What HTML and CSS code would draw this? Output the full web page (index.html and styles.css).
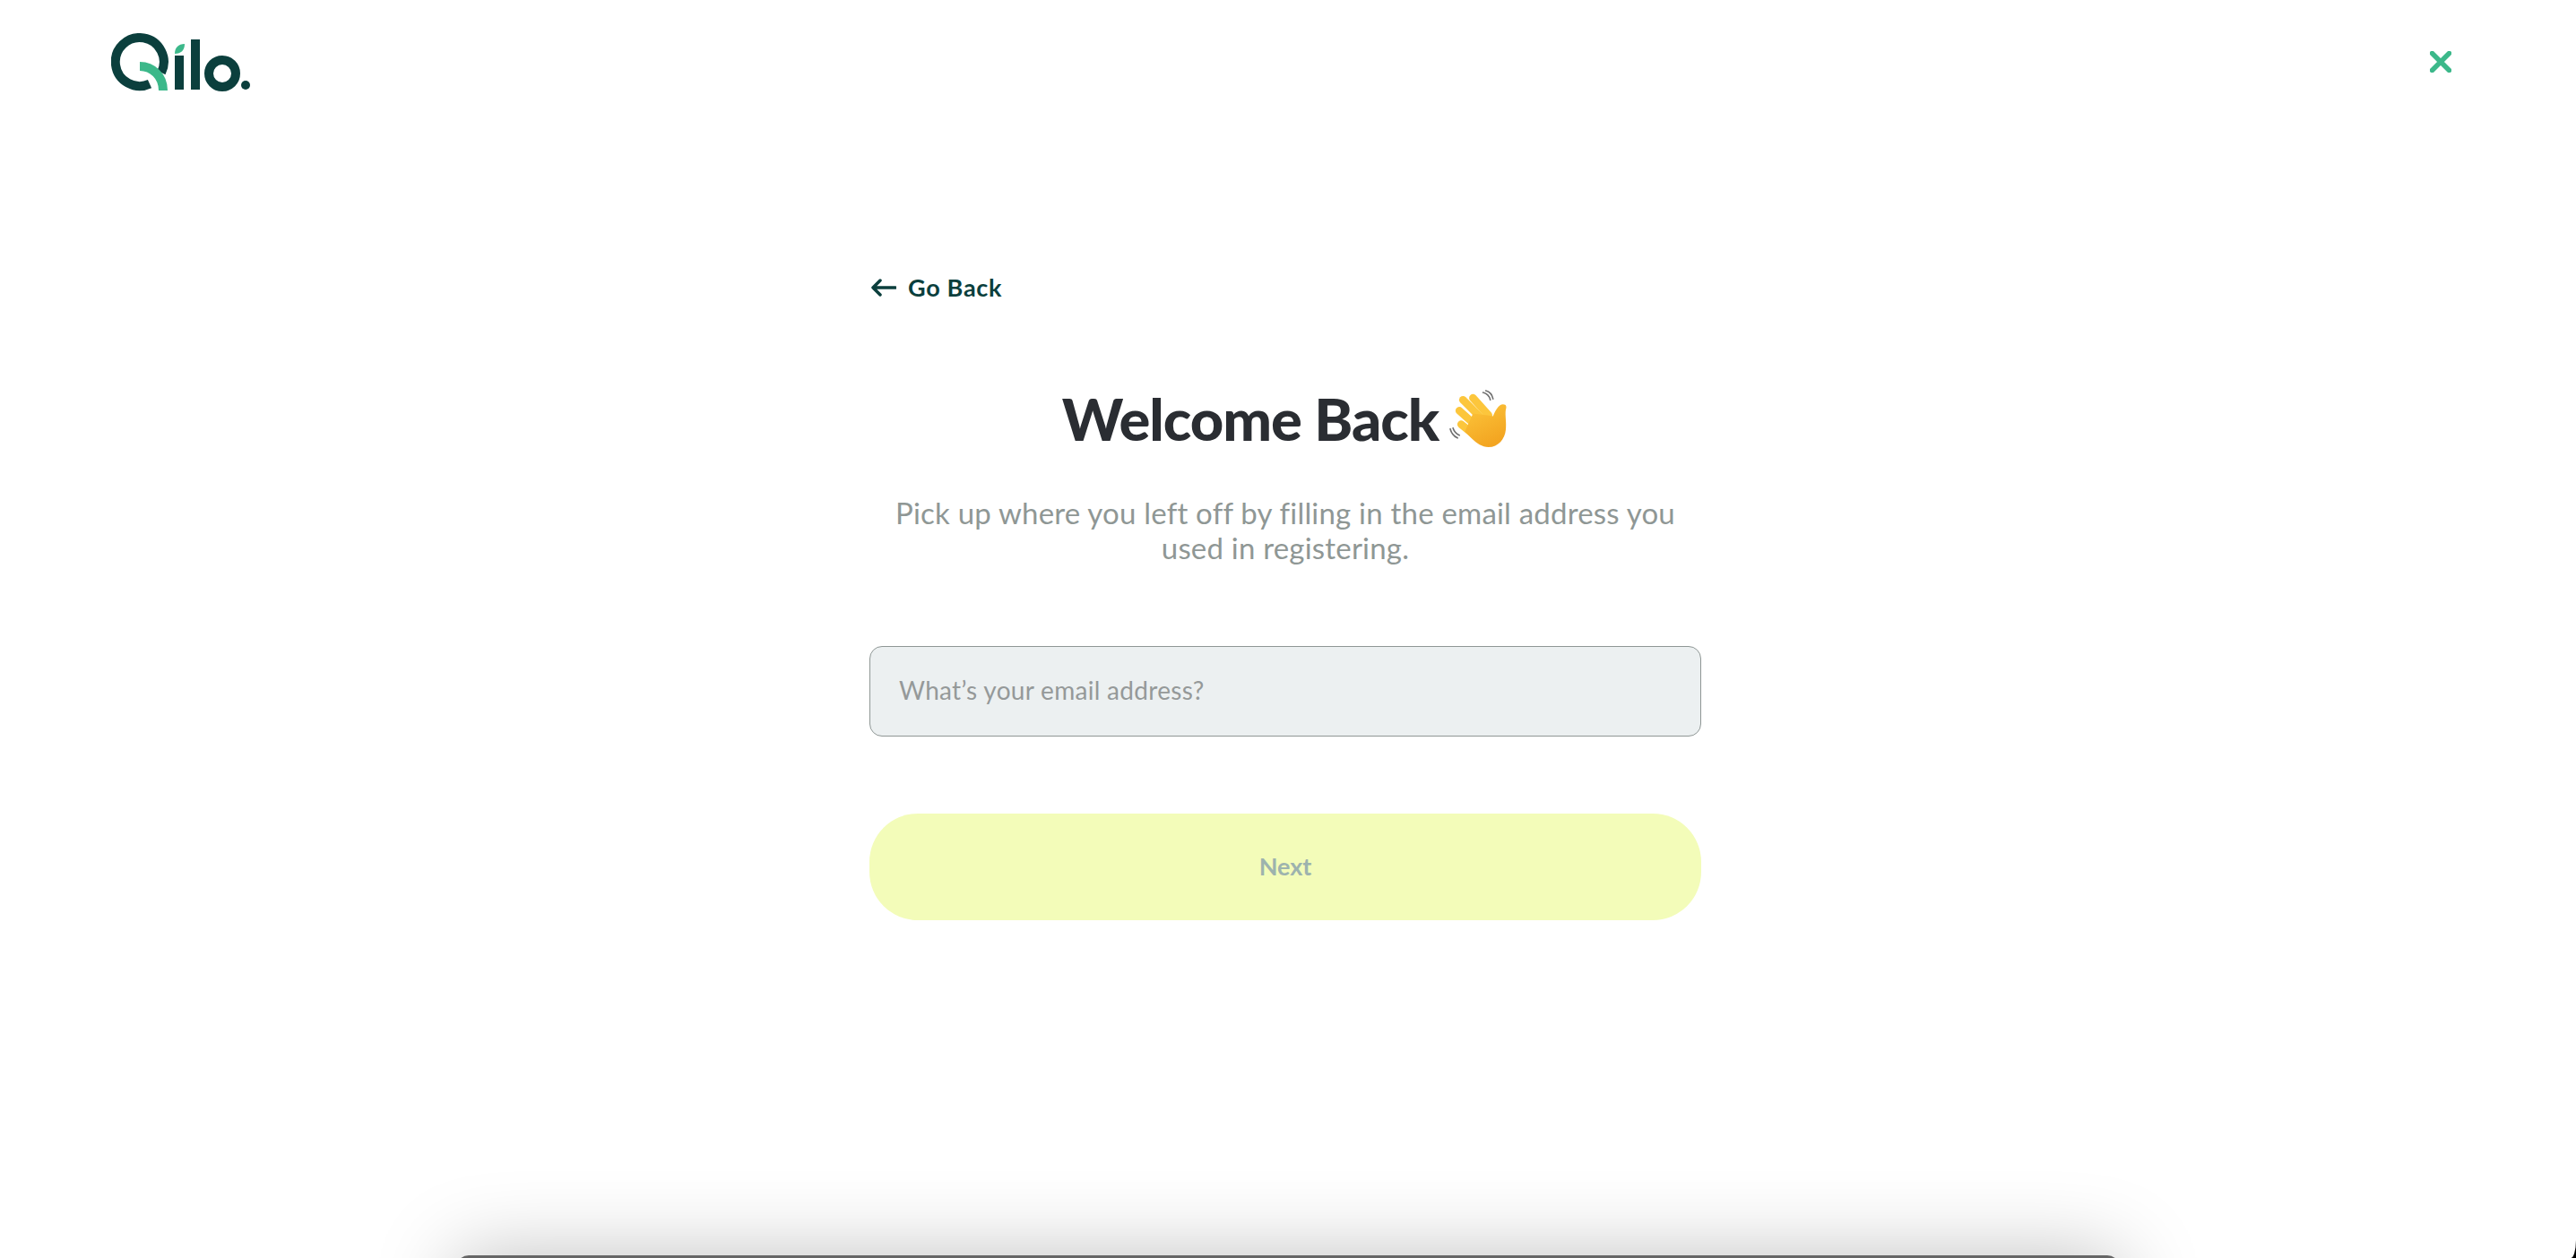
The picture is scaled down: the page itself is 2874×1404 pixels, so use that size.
FILE: index.html
```html
<!DOCTYPE html>
<html lang="en">
  <head>
    <meta charset="UTF-8" />
    <title>Qilo - Welcome Back</title>
    <link rel="stylesheet" href="styles.css">
  </head>
  <body>
    <div class="page">
      <header class="topbar">
        <svg class="logo" viewBox="0 0 156 65" role="img" aria-label="Qilo.">
          <path class="logo-dark-line" d="M43 56.6A27 27 0 1 1 56 44" />
          <path class="logo-green-line" d="M32 37C46 37 58 48 58 64" />
          <path class="logo-green" d="M71 23C71 16 75 12 82 12C82 19 78 23 71 23Z" />
          <rect class="logo-dark" x="71" y="25" width="10" height="38" />
          <rect class="logo-dark" x="89" y="7" width="10" height="56" />
          <circle class="logo-o" cx="124" cy="45" r="15" />
          <circle class="logo-dark" cx="150" cy="58" r="5" />
        </svg>
        <button class="close" aria-label="Close">
          <svg viewBox="0 0 24 24" width="24" height="24">
            <path d="M2.5 2.5L21.5 21.5M21.5 2.5L2.5 21.5" />
          </svg>
        </button>
      </header>

      <main class="form">
        <a class="back" href="#">
          <svg viewBox="0 0 28 20" width="28" height="20">
            <path d="M27 10H2M10 2L2 10L10 18" />
          </svg>
          <span>Go Back</span>
        </a>

        <h1 class="title">
          <span>Welcome Back</span>
          <svg class="wave" viewBox="20 20 65 65" width="66" height="66" aria-hidden="true">
            <defs>
              <linearGradient id="skin" x1="0" y1="0" x2="0.5" y2="1">
                <stop offset="0" stop-color="#fcc63c" />
                <stop offset="1" stop-color="#f3a521" />
              </linearGradient>
            </defs>
            <path class="wave-lines" d="M57 25C61 26 64 29 65 33M60 23C64 24 67 27 68 32M21 65C22 69 25 73 29 75M24 64C25 67 27 70 31 72" />
            <g class="fingers">
              <path d="M35 33L55 53" />
              <path d="M46 31L63 50" />
              <path d="M31 45L50 62" />
              <path d="M33 60L48 72" />
            </g>
            <path class="palm" d="M46 48L62 50L68 51C70 46 74 38 79 38C83 38 83 41 82 44C81 50 83 58 82 66C81 76 74 85 63 85C56 85 50 81 45 76L37 68Z" />
          </svg>
        </h1>

        <p class="lead">Pick up where you left off by filling in the email address you used in registering.</p>

        <input class="email" type="text" placeholder="What’s your email address?" />

        <button class="next" disabled>Next</button>
      </main>

      <div class="peek"></div>
    </div>
  </body>
</html>
```

FILE: styles.css
```css
html {
  background-color: #000;
}
body {
  margin: 0;
  font-family: "Lato", "Noto Sans", sans-serif;
}
.page {
  height: 100vh;
  overflow: hidden;
  display: flex;
  flex-direction: column;
  background-color: #fff;
  border-bottom-right-radius: 6px 20px;
}
.topbar {
  display: flex;
  justify-content: space-between;
  padding: 37px 139px 0 124px;
}
.logo {
  width: 156px;
  height: 65px;
}
.logo-dark {
  fill: #0b3f3d;
}
.logo-green {
  fill: #3cb88a;
}
.logo-dark-line,
.logo-green-line,
.logo-o {
  fill: none;
  stroke-width: 10;
}
.logo-dark-line,
.logo-o {
  stroke: #0b3f3d;
}
.logo-green-line {
  stroke: #3cb88a;
}
.close {
  align-self: flex-start;
  display: flex;
  margin-top: 20px;
  padding: 0;
  border: none;
  background: none;
}
.close path {
  fill: none;
  stroke: #3cb88a;
  stroke-width: 5.5;
  stroke-linecap: round;
}
.form {
  flex: 1;
  min-height: 0;
  width: 928px;
  margin-left: 970px;
  padding-top: 202px;
}
.back {
  display: flex;
  align-items: center;
  gap: 13px;
  padding-left: 2px;
  height: 34px;
  color: #0b3f3d;
  font-size: 27px;
  font-weight: 700;
  letter-spacing: 0.7px;
  text-decoration: none;
}
.back span {
  margin-bottom: 2px;
}
.back path {
  fill: none;
  stroke: #0b3f3d;
  stroke-width: 3.5;
  stroke-linecap: round;
  stroke-linejoin: round;
}
.title {
  display: flex;
  justify-content: center;
  align-items: center;
  gap: 12px;
  margin: 90px 0 0;
  color: #2a2d32;
  font-size: 65px;
  font-weight: 900;
  line-height: 78px;
  letter-spacing: -1px;
}
.wave {
  margin-top: -3px;
}
.wave-lines {
  fill: none;
  stroke: #6f6f6f;
  stroke-width: 1.6;
  stroke-linecap: round;
}
.fingers path {
  fill: none;
  stroke: #fcc63c;
  stroke-width: 8.5;
  stroke-linecap: round;
}
.palm {
  fill: url(#skin);
}
.lead {
  width: 880px;
  margin: 47px auto 0;
  color: #8f9795;
  font-size: 33px;
  line-height: 39px;
  letter-spacing: 0.2px;
  text-align: center;
}
.email {
  display: block;
  box-sizing: border-box;
  width: 100%;
  height: 101px;
  margin-top: 90px;
  padding: 0 32px 3px;
  border: 1px solid #8f9795;
  border-radius: 14px;
  background-color: #ecf0f1;
  font-family: inherit;
  font-size: 28px;
  letter-spacing: 0.3px;
}
.email::placeholder {
  color: #959999;
}
.next {
  display: block;
  width: 100%;
  height: 119px;
  margin-top: 86px;
  padding-bottom: 4px;
  border: none;
  border-radius: 54px;
  background-color: #f3fcb9;
  color: #9db3ae;
  font-family: inherit;
  font-size: 27px;
  font-weight: 700;
}
/* window behind the page, only its top edge shows */
.peek {
  flex: none;
  width: 1856px;
  height: 300px;
  margin: 0 auto -297px;
  border-radius: 14px 14px 0 0;
  background-color: #666;
  box-shadow: 0 0 90px rgba(0, 0, 0, 0.25);
}
```
